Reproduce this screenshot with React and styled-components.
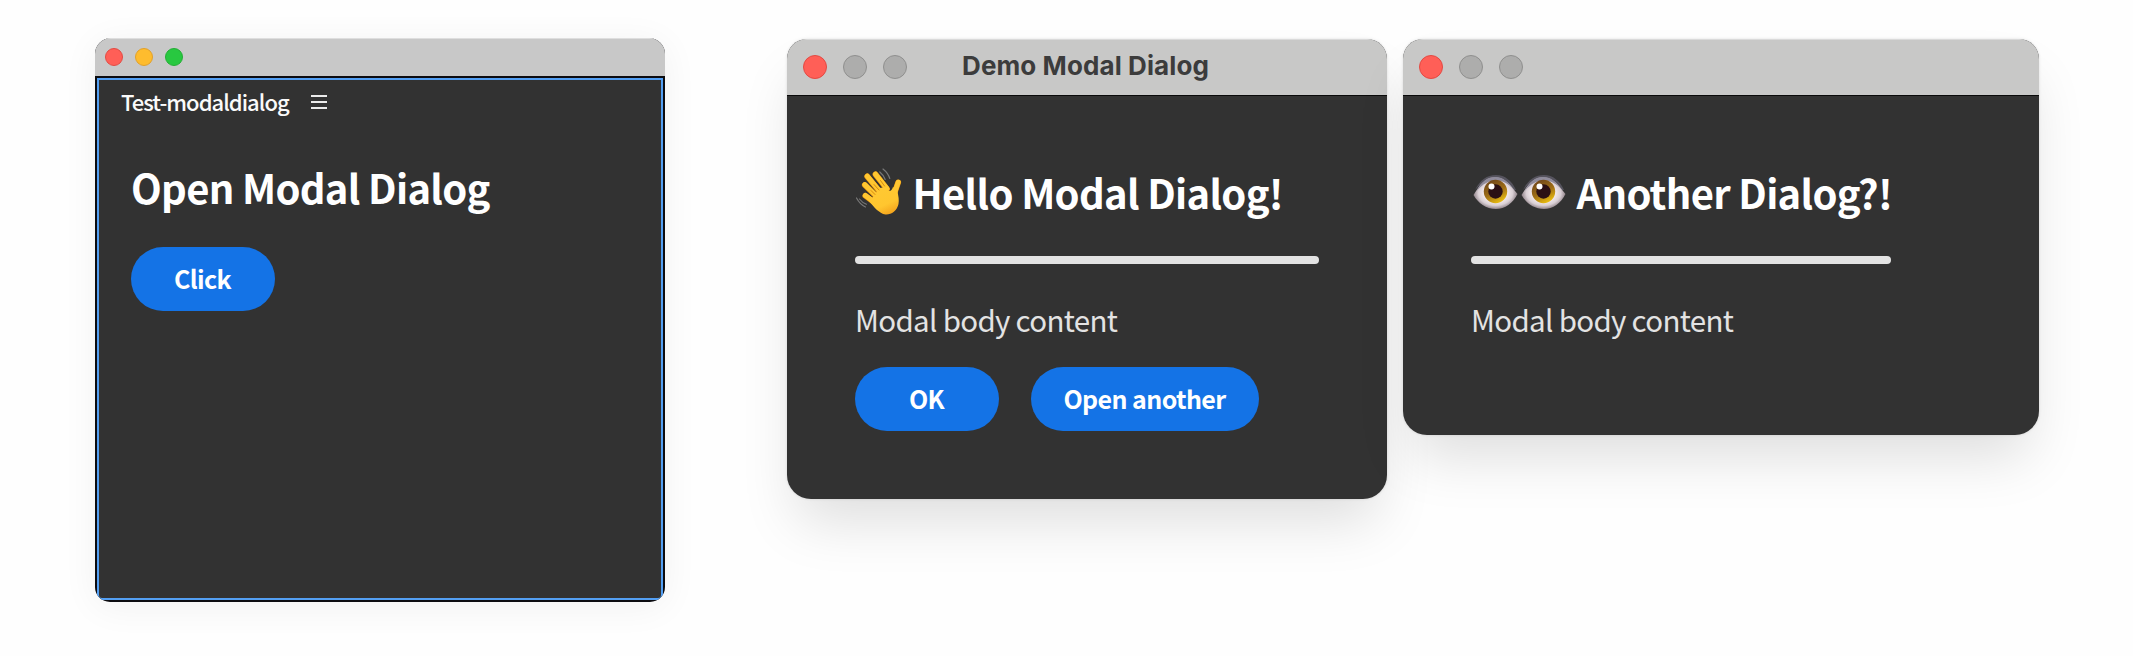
import React from "react";
import styled, { createGlobalStyle } from "styled-components";

const GlobalStyle = createGlobalStyle`
  * { box-sizing: border-box; }
  body {
    margin: 0;
    background: #fefefe;
    font-family: "Noto Sans CJK JP", "Noto Sans", sans-serif;
    overflow: hidden;
  }
`;

const Desktop = styled.main`
  display: flex;
  align-items: flex-start;
  height: 656px;
  padding: 38px 0 0 95px;
`;

const Dialogs = styled.div`
  display: flex;
  align-items: flex-start;
  gap: 16px;
  margin: 1px 0 0 122px;
`;

const PanelWindow = styled.section`
  display: flex;
  flex-direction: column;
  width: 570px;
  height: 563.5px;
  border-radius: 16px 16px 15px 15px;
  overflow: hidden;
  background: #0c0c10;
  box-shadow: 0 5px 36px rgba(0, 0, 0, 0.055);
`;

const DialogWindow = styled.section`
  width: ${(p) => p.$width}px;
  height: ${(p) => p.$height}px;
  border-radius: 20px 20px 24px 24px;
  overflow: hidden;
  background: #323232;
  box-shadow: 0 0 3px rgba(0, 0, 0, 0.12), 0 32px 56px -10px rgba(0, 0, 0, 0.13);
`;

const PanelBar = styled.header`
  display: flex;
  align-items: center;
  gap: 12px;
  height: 38px;
  flex: none;
  padding: 0 10px;
  background: #c8c8c8;
  box-shadow: inset 0 1px 0 #dedede;
`;

const DialogBar = styled.header`
  display: grid;
  grid-template-columns: 104px 1fr 107px;
  align-items: center;
  height: 57px;
  padding: 0 16px;
  background: #c8c8c7;
  border-bottom: 1px solid #0a0a0a;
  box-shadow: inset 0 1px 0 #dadada;
`;

const Lights = styled.div`
  display: flex;
  gap: 16px;
`;

const Light = styled.i`
  width: ${(p) => p.$size}px;
  height: ${(p) => p.$size}px;
  border-radius: 50%;
  background: ${(p) => p.$fill};
  border: 1px solid ${(p) => p.$edge};
`;

const BarTitle = styled.span`
  padding-bottom: 2px;
  font: 700 26px/32px Inter, sans-serif;
  letter-spacing: 0.1px;
  color: #3c3c3c;
  text-align: center;
  white-space: nowrap;
`;

const Panel = styled.div`
  flex: 1;
  margin: 2px 2px 1.5px;
  border: 2px solid #539ff3;
  border-radius: 0 0 5px 5px;
  background: #323232;
`;

const Tab = styled.div`
  display: flex;
  align-items: center;
  gap: 22px;
  height: 36px;
  padding: 6px 0 0 22px;
`;

const TabLabel = styled.span`
  font-size: 22px;
  line-height: 30px;
  font-weight: 500;
  letter-spacing: -0.96px;
  color: #fafafa;
  white-space: nowrap;
`;

const PanelContent = styled.div`
  padding: 47px 32px 0;
`;

const DialogContent = styled.div`
  width: fit-content;
  padding: 72px 0 0 68px;
`;

const Heading = styled.h1`
  display: flex;
  align-items: center;
  margin: 0;
  font-size: 40px;
  line-height: 48px;
  font-weight: 700;
  letter-spacing: -0.7px;
  color: #fff;
  white-space: nowrap;
`;

const HeadingText = styled.span`
  margin-left: ${(p) => p.$gap || 0}px;
`;

const Rule = styled.hr`
  width: ${(p) => p.$width}px;
  height: 8px;
  margin: 39.5px 0 35.5px;
  border: 0;
  border-radius: 4px;
  background: #e3e3e3;
`;

const Copy = styled.p`
  margin: 0;
  font-size: 29.5px;
  line-height: 40px;
  letter-spacing: -0.68px;
  color: #e3e3e3;
  white-space: nowrap;
`;

const Actions = styled.div`
  display: flex;
  gap: 32px;
  margin-top: ${(p) => p.$top}px;
`;

const Button = styled.button`
  width: ${(p) => p.$width || 144}px;
  height: 64px;
  padding: 0 1px 3px 0;
  border: 0;
  border-radius: 32px;
  background: #1473e6;
  color: #fff;
  font: 700 25px/36px "Noto Sans CJK JP", "Noto Sans", sans-serif;
  letter-spacing: -0.6px;
  white-space: nowrap;
`;

const MenuGlyph = styled.svg`
  margin-top: 2px;
`;

const MenuIcon = () => (
  <MenuGlyph width="16" height="14" viewBox="0 0 16 14" fill="#ebebeb" aria-hidden="true">
    <path d="M0 0h16v2H0zM0 6h16v2H0zM0 12h16v2H0z" />
  </MenuGlyph>
);

const WaveIcon = () => (
  <svg width="48" height="48" viewBox="0 0 48 48" role="img" aria-label="Waving hand">
    <defs>
      <linearGradient id="skin" x1="0.2" y1="0" x2="0.7" y2="1">
        <stop offset="0" stopColor="#ffc933" />
        <stop offset="0.65" stopColor="#ffc62f" />
        <stop offset="1" stopColor="#f4a31c" />
      </linearGradient>
    </defs>
    <g fill="none" strokeLinecap="round">
      <g stroke="#e8930c" strokeWidth="5.8">
        <path d="M12.2 8.4 25 24" />
        <path d="M20.5 6.4 32 21" />
        <path d="M9.8 17 22 29" />
        <path d="M10.4 27.8 20 35" />
        <path d="M43.2 14.4 39.5 25" />
      </g>
      <g stroke="#ffc731" strokeWidth="5">
        <path d="M12.2 8.2 25 23.5" />
        <path d="M20.5 6.2 32 20.5" />
        <path d="M9.8 16.6 22 28.5" />
        <path d="M10.4 27.4 20 34.5" />
        <path d="M43.2 14.2 39.5 25" />
      </g>
    </g>
    <path
      d="M18 29 24.5 20 31 19 34 23Q36.5 23.5 38 19L42 22Q44.5 31 43.5 36C42 43 36 47 30.5 46.5C24 45.5 19 39 14 33Z"
      fill="url(#skin)"
    />
    <path d="M16 22.5 20 26.500M19 16.500 24 22M25.500 12.500 29.500 18" stroke="#d98a10" strokeWidth="1" strokeLinecap="round" />
    <path d="M28 1Q33 5 34.8 10.5M24.8 4Q29 7.5 30.2 11.5M1.5 30Q5 36.5 10.5 39M4.5 28.5" fill="none" stroke="#777" strokeWidth="1.2" strokeLinecap="round" />
    <path d="M4.5 31Q7.500 35 11.500 36.300" fill="none" stroke="#777" strokeWidth="1.1" strokeLinecap="round" />
  </svg>
);

const EyeIcon = ({ id }) => (
  <svg width="48" height="48" viewBox="0 0 48 48" role="img" aria-label="Eye">
    <defs>
      <radialGradient id={`${id}-white`} cx="0.5" cy="0.5" r="0.52">
        <stop offset="0.4" stopColor="#fff6f6" />
        <stop offset="0.75" stopColor="#d9cfd4" />
        <stop offset="1" stopColor="#84767c" />
      </radialGradient>
      <linearGradient id={`${id}-iris`} x1="0.2" y1="0" x2="0.7" y2="1">
        <stop offset="0" stopColor="#6b4319" />
        <stop offset="0.55" stopColor="#a06f16" />
        <stop offset="1" stopColor="#f0c40f" />
      </linearGradient>
    </defs>
    <path d="M4 22C9 12 16 7 25 7C34 7 41 13 45 22L42 22C36 14 32 11 24 11C15 11 10 16 4 22Z" fill="#55535d" />
    <path d="M2.5 27C8 18 14 9 24 9C34 9 40 18 46.5 26C42 35 34 41 25 41C15 41 7 35 2.5 27Z" fill={`url(#${id}-white)`} />
    <path d="M5.5 23C11 13 17 9 24 9C33 9 38 15 43 22C37 15 32 12.5 25 12.5C17 12.5 12 16 5.5 23Z" fill="#8f8b9b" />
    <circle cx="24.5" cy="23.5" r="11.7" fill={`url(#${id}-iris)`} />
    <circle cx="24.5" cy="23.5" r="7.2" fill="#2b1014" />
    <circle cx="20.5" cy="18.5" r="3" fill="#fff" />
  </svg>
);

const DialogLights = () => (
  <Lights>
    <Light $size={24} $fill="#ff5f57" $edge="#e24a43" />
    <Light $size={24} $fill="#adadac" $edge="#8f8f8e" />
    <Light $size={24} $fill="#adadac" $edge="#8f8f8e" />
  </Lights>
);

export default function App() {
  return (
    <>
      <GlobalStyle />
      <Desktop>
        <PanelWindow>
          <PanelBar>
            <Light $size={18} $fill="#ff5f57" $edge="#e24b43" />
            <Light $size={18} $fill="#febc2e" $edge="#e1a02b" />
            <Light $size={18} $fill="#28c840" $edge="#24ae35" />
          </PanelBar>
          <Panel>
            <Tab>
              <TabLabel>Test-modaldialog</TabLabel>
              <MenuIcon />
            </Tab>
            <PanelContent>
              <Heading>
                <HeadingText>Open Modal Dialog</HeadingText>
              </Heading>
              <Actions $top={36}>
                <Button>Click</Button>
              </Actions>
            </PanelContent>
          </Panel>
        </PanelWindow>
        <Dialogs>
          <DialogWindow $width={600} $height={460}>
            <DialogBar>
              <DialogLights />
              <BarTitle>Demo Modal Dialog</BarTitle>
            </DialogBar>
            <DialogContent>
              <Heading>
                <WaveIcon />
                <HeadingText $gap={9.5}>Hello Modal Dialog!</HeadingText>
              </Heading>
              <Rule $width={464} />
              <Copy>Modal body content</Copy>
              <Actions $top={28}>
                <Button>OK</Button>
                <Button $width={228}>Open another</Button>
              </Actions>
            </DialogContent>
          </DialogWindow>
          <DialogWindow $width={636} $height={396}>
            <DialogBar>
              <DialogLights />
            </DialogBar>
            <DialogContent>
              <Heading>
                <EyeIcon id="left-eye" />
                <EyeIcon id="right-eye" />
                <HeadingText $gap={9.5}>Another Dialog?!</HeadingText>
              </Heading>
              <Rule $width={420} />
              <Copy>Modal body content</Copy>
            </DialogContent>
          </DialogWindow>
        </Dialogs>
      </Desktop>
    </>
  );
}
